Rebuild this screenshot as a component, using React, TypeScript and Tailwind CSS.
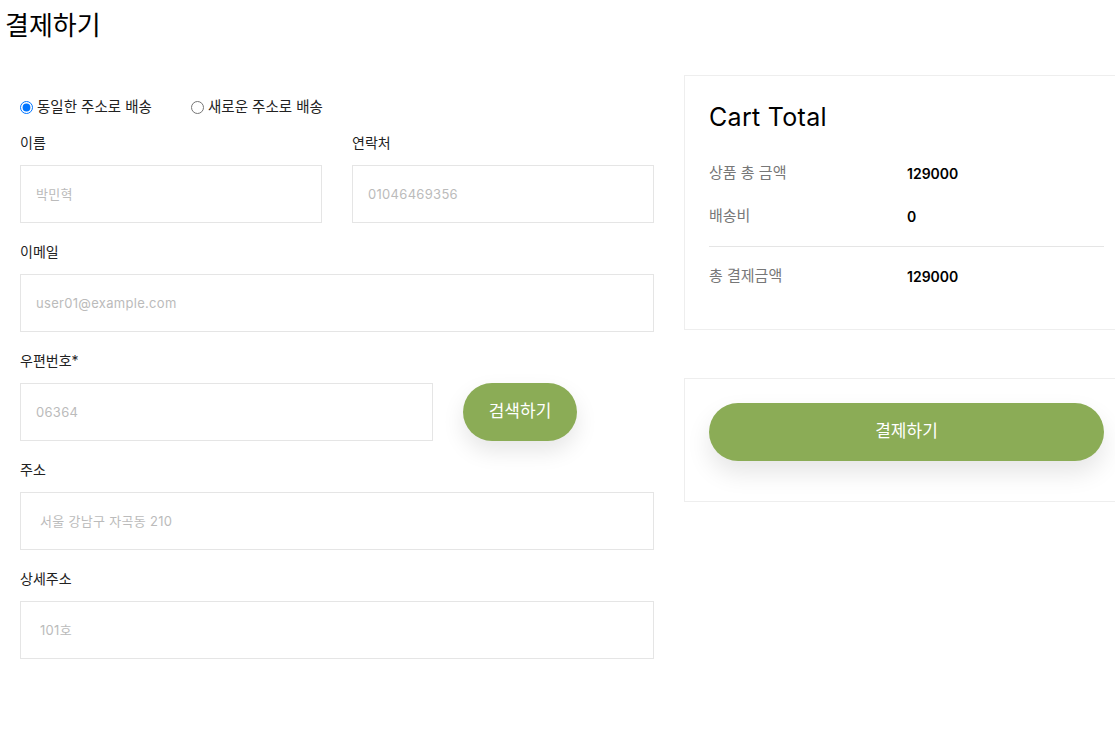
import React from "react";

const font = "font-['Inter','Noto_Sans_CJK_KR',sans-serif]";

interface FieldProps {
  label: string;
  placeholder: string;
  wide?: boolean;
}

function Field({ label, placeholder, wide }: FieldProps) {
  return (
    <div className="flex flex-col">
      <label className="h-5 leading-5 text-[14px] text-[#222] mb-3">{label}</label>
      <input
        className={`h-[58px] border border-[#e5e5e5] text-[13px] tracking-[0.3px] outline-none placeholder:text-[#bbb] ${
          wide ? "pl-[19px]" : "pl-[15px]"
        }`}
        placeholder={placeholder}
      />
    </div>
  );
}

export default function App() {
  return (
    <div className={`min-h-screen w-full overflow-hidden bg-white ${font}`}>
      <h2 className="pl-[5px] pt-[10px] text-[26px] leading-8 text-black">결제하기</h2>

      <div className="mt-[33px] flex gap-[30px] pl-5">
        {/* 배송 정보 */}
        <div className="w-[634px] shrink-0 pt-[22px]">
          <div className="flex h-5 items-center text-[14.5px] text-[#222]">
            <label className="flex w-[171px] items-center gap-[4px]">
              <input type="radio" name="ship" defaultChecked className="m-0 h-[13px] w-[13px]" />
              동일한 주소로 배송
            </label>
            <label className="flex items-center gap-[4px]">
              <input type="radio" name="ship" className="m-0 h-[13px] w-[13px]" />
              새로운 주소로 배송
            </label>
          </div>

          <div className="mt-4 grid grid-cols-2 gap-[30px]">
            <Field label="이름" placeholder="박민혁" />
            <Field label="연락처" placeholder="01046469356" />
          </div>

          <div className="mt-[19px]">
            <Field label="이메일" placeholder="user01@example.com" />
          </div>

          <div className="mt-[19px] flex flex-col">
            <label className="h-5 leading-5 text-[14px] text-[#222] mb-3">우편번호*</label>
            <div className="flex gap-[30px]">
              <input
                className="h-[58px] w-[413px] border border-[#e5e5e5] pl-[15px] text-[13px] tracking-[0.3px] outline-none placeholder:text-[#bbb]"
                placeholder="06364"
              />
              <button className="h-[58px] w-[114px] rounded-full bg-[#8bac56] text-[17px] text-white shadow-[0_10px_22px_rgba(0,0,0,0.1)]">
                검색하기
              </button>
            </div>
          </div>

          <div className="mt-[19px]">
            <Field label="주소" placeholder="서울 강남구 자곡동 210" wide />
          </div>

          <div className="mt-[19px]">
            <Field label="상세주소" placeholder="101호" wide />
          </div>
        </div>

        {/* 결제 요약 */}
        <div className="w-[445px] shrink-0">
          <div className="border border-[#eeeeee] px-[24px] pt-[25px] pb-[43px]">
            <h3 className="text-[25px] leading-8 tracking-[0.3px] text-black">Cart Total</h3>
            <div className="mt-[30px] flex h-5 items-center text-[14px]">
              <span className="w-[198px] text-[15px] text-[#777]">상품 총 금액</span>
              <span className="font-semibold text-black">129000</span>
            </div>
            <div className="mt-[23px] flex h-5 items-center text-[14px]">
              <span className="w-[198px] text-[15px] text-[#777]">배송비</span>
              <span className="font-semibold text-black">0</span>
            </div>
            <div className="mt-5 h-px bg-[#e5e5e5]" />
            <div className="mt-[19px] flex h-5 items-center text-[14px]">
              <span className="w-[198px] text-[15px] text-[#777]">총 결제금액</span>
              <span className="font-semibold text-black">129000</span>
            </div>
          </div>

          <div className="mt-[48px] border border-[#eeeeee] px-[24px] pt-[24px] pb-[40px]">
            <button className="h-[58px] w-full rounded-full bg-[#8bac56] text-[17px] text-white shadow-[0_12px_24px_rgba(0,0,0,0.1)]">
              결제하기
            </button>
          </div>
        </div>
      </div>
    </div>
  );
}
